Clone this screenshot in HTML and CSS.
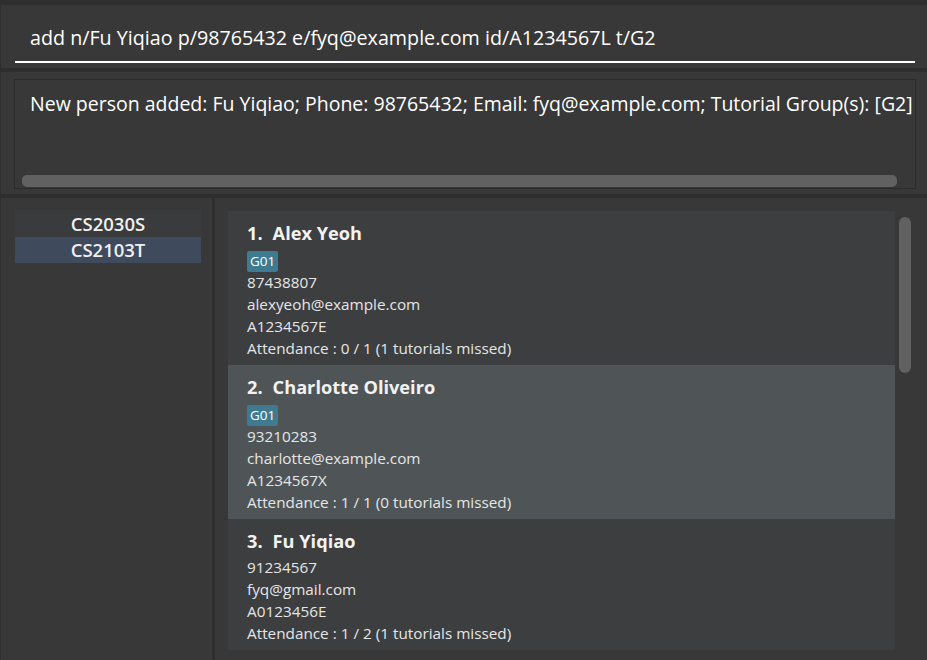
FILE: index.html
```html
<!DOCTYPE html>
<html>
<head>
<meta charset="utf-8">
<link rel="stylesheet" href="styles.css">
</head>
<body>
<div class="app">
  <div class="command-pane">
    <div class="command-input">add n/Fu Yiqiao p/98765432 e/fyq@example.com id/A1234567L t/G2</div>
  </div>
  <div class="result-pane">
    <div class="result-box">
      <div class="result-text">New person added: Fu Yiqiao; Phone: 98765432; Email: fyq@example.com; Tutorial Group(s): [G2]</div>
      <div class="hscroll"><div class="hthumb"></div></div>
    </div>
  </div>
  <div class="main">
    <div class="side">
      <div class="course-list">
        <div class="course">CS2030S</div>
        <div class="course selected">CS2103T</div>
      </div>
    </div>
    <div class="persons">
      <div class="cards">
        <div class="card">
          <div class="name"><span class="idx">1.</span>Alex Yeoh</div>
          <div class="tags"><span class="tag">G01</span></div>
          <div class="line">87438807</div>
          <div class="line">alexyeoh@example.com</div>
          <div class="line">A1234567E</div>
          <div class="line">Attendance : 0 / 1 (1 tutorials missed)</div>
        </div>
        <div class="card active">
          <div class="name"><span class="idx">2.</span>Charlotte Oliveiro</div>
          <div class="tags"><span class="tag">G01</span></div>
          <div class="line">93210283</div>
          <div class="line">charlotte@example.com</div>
          <div class="line">A1234567X</div>
          <div class="line">Attendance : 1 / 1 (0 tutorials missed)</div>
        </div>
        <div class="card last">
          <div class="name"><span class="idx">3.</span>Fu Yiqiao</div>
          <div class="line">91234567</div>
          <div class="line">fyq@gmail.com</div>
          <div class="line">A0123456E</div>
          <div class="line">Attendance : 1 / 2 (1 tutorials missed)</div>
        </div>
      </div>
      <div class="vscroll"><div class="vthumb"></div></div>
    </div>
  </div>
</div>
</body>
</html>
```

FILE: styles.css
```css
* { box-sizing: border-box; }
html, body { margin: 0; padding: 0; }
body {
  background: #2e2e2e;
  font-family: "Open Sans", "Noto Sans", sans-serif;
  color: #ffffff;
  width: 927px;
  height: 660px;
  overflow: hidden;
}
.app {
  display: flex;
  flex-direction: column;
  height: 660px;
  padding-top: 5px;
  padding-left: 1px;
}
.command-pane {
  background: #383838;
  height: 63px;
  padding: 13px 12px 0 14px;
}
.command-input {
  height: 45px;
  border-bottom: 2px solid #ffffff;
  font-size: 19.7px;
  line-height: 40px;
  padding-left: 15px;
  color: #ffffff;
  white-space: nowrap;
}
.result-pane {
  margin-top: 4px;
  background: #383838;
  height: 122px;
  padding: 7px 11px 0 13px;
}
.result-box {
  height: 110px;
  border: 1px solid #2b2b2b;
  padding: 0 0 0 7px;
  display: flex;
  flex-direction: column;
}
.result-text {
  font-size: 19.5px;
  line-height: 24px;
  padding: 12px 0 0 8px;
  white-space: nowrap;
  overflow: hidden;
  flex: 1;
}
.hscroll {
  height: 16px;
  padding: 3px 18px 0 0;
}
.hthumb {
  height: 12px;
  background: #616161;
  border-radius: 5px;
}
.main {
  margin-top: 4px;
  flex: 1;
  display: flex;
  gap: 3px;
}
.side {
  width: 211px;
  background: #383838;
  padding: 12px 11px 0 14px;
}
.course-list {
  background: #383838;
}
.course {
  height: 27px;
  background: #3a3b3d;
  text-align: center;
  font-weight: 600;
  font-size: 18.5px;
  line-height: 27px;
  color: #f0f0f0;
}
.course.selected {
  background: #3f4a5c;
  height: 26px;
  line-height: 25px;
}
.persons {
  flex: 1;
  background: #383838;
  display: flex;
  padding: 13px 0 0 13px;
}
.cards {
  width: 667px;
}
.card {
  background: #3c3e40;
  height: 154px;
  padding: 10px 0 0 19px;
  color: #e6e6e6;
}
.card.active {
  background: #4f5557;
}
.card.last {
  height: 131px;
}
.name {
  font-size: 18.2px;
  font-weight: 700;
  color: #f2f2f2;
  line-height: 24px;
  height: 25px;
}
.idx {
  margin-right: 10px;
}
.tags {
  height: 25px;
  padding-top: 3px;
}
.tag {
  display: inline-block;
  background: #3e7b91;
  color: #ffffff;
  font-size: 13.5px;
  line-height: 20px;
  height: 21px;
  padding: 0 3px;
  border-radius: 2px;
}
.line {
  font-size: 15.3px;
  line-height: 22px;
  height: 22px;
}
.card.last .name {
  height: 27px;
}
.vscroll {
  width: 32px;
  padding: 6px 0 0 4px;
}
.vthumb {
  width: 12px;
  height: 156px;
  background: #616161;
  border-radius: 6px;
}
```
